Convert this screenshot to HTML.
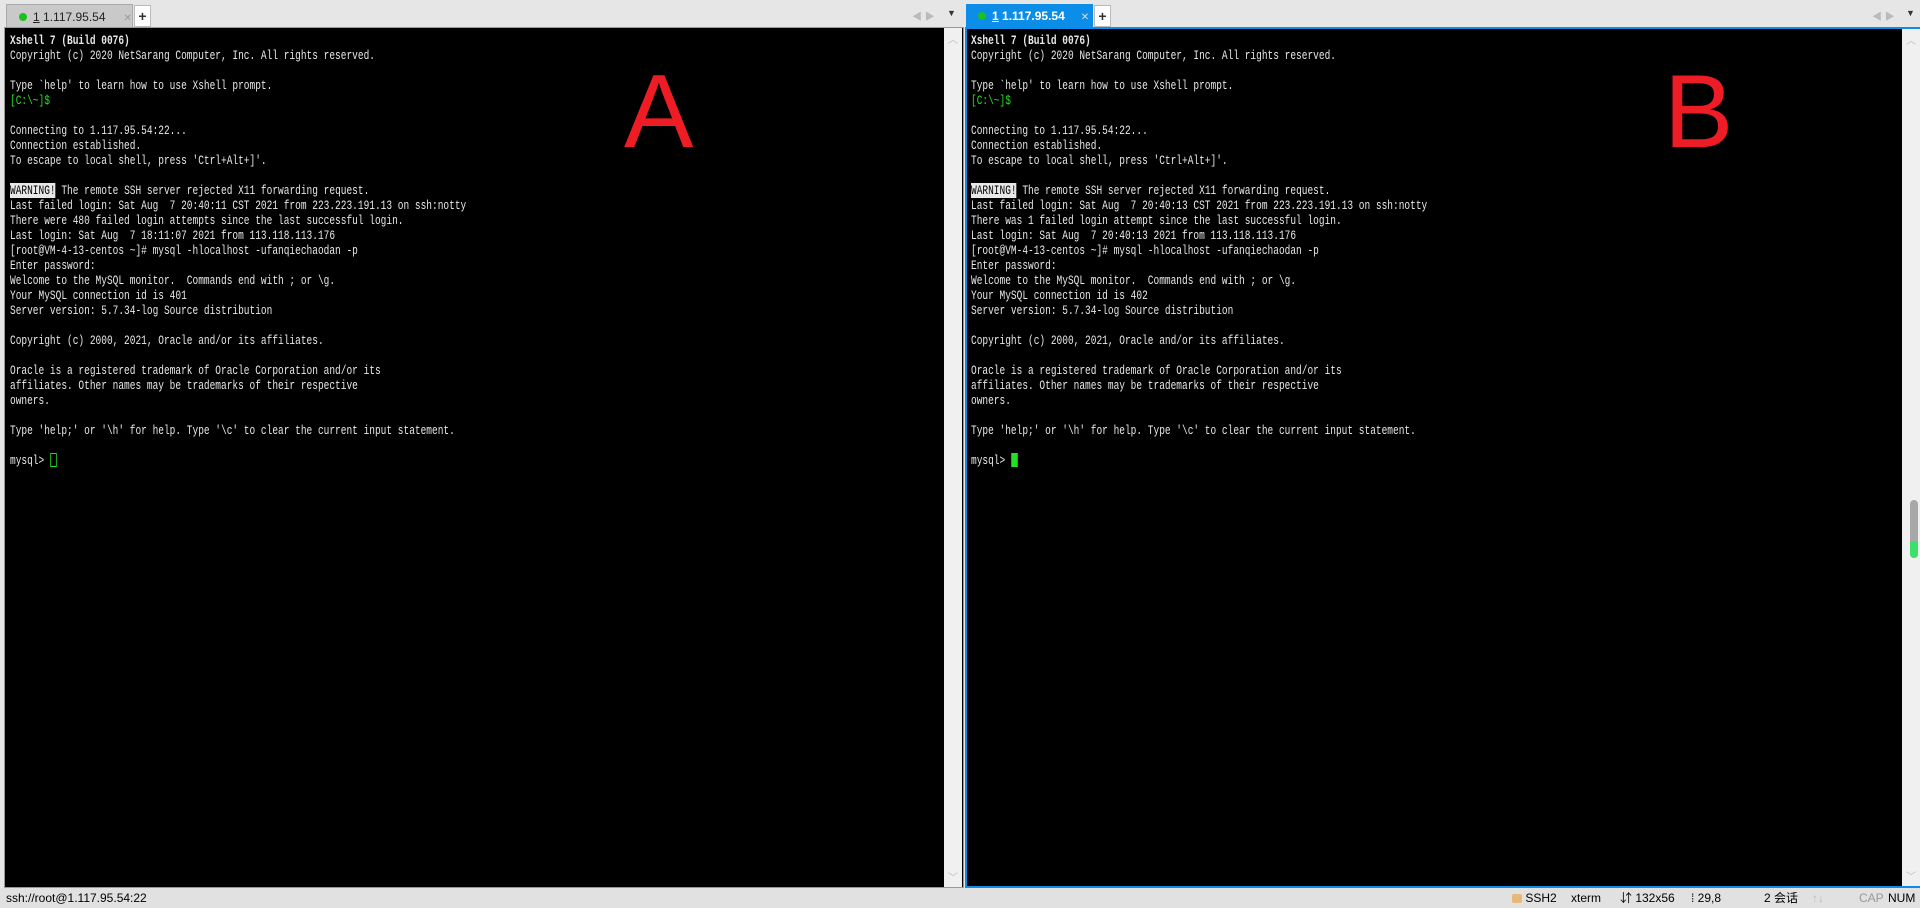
<!DOCTYPE html>
<html><head><meta charset="utf-8"><style>
*{margin:0;padding:0;box-sizing:border-box}
body{width:1920px;height:908px;background:#e6e6e6;position:relative;overflow:hidden;font-family:"Liberation Sans","Noto Sans CJK SC",sans-serif}
.abs{position:absolute}
.tabbar{top:0;height:28px;background:#e6e6e6}
.tab{top:4px;height:24px;font-size:12px;line-height:24px;padding-left:12px;white-space:nowrap}
.dot{display:inline-block;width:8px;height:8px;border-radius:50%;background:#1bc11b;margin-right:6px;vertical-align:0}
.plus{top:5px;width:17px;height:22px;background:#fff;border:1px solid #bbb;font-size:14px;font-weight:bold;text-align:center;line-height:20px;color:#333}
.txt{position:absolute;font-family:"Liberation Mono",monospace;font-size:13px;line-height:15px;color:#e8e8e8;white-space:pre;transform:scaleX(0.731);transform-origin:0 0}
.g{color:#22e022}
.w{background:#e8e8e8;color:#000}
.sb{background:#f0f0f0}
.big{color:#ee1c24;font-size:104px;line-height:1;font-family:"Liberation Sans",sans-serif}
.status{top:888px;height:20px;left:0;width:1920px;background:#e1e1e1;font-size:12px;line-height:20px;color:#000}
</style></head><body>
<div class="abs tabbar" style="left:0;width:1920px"></div>
<!-- left tab -->
<div class="abs tab" style="left:6px;width:127px;background:#c9c9c9;border:1px solid #aaa;border-bottom:none;color:#222"><span class="dot"></span><u>1</u> 1.117.95.54<span style="color:#999;margin-left:18px;font-size:10px">✕</span></div>
<div class="abs plus" style="left:134px">+</div>
<div class="abs" style="left:912px;top:8px;font-size:10px;color:#bbb">◀ ▶</div>
<div class="abs" style="left:947px;top:8px;font-size:9px;color:#333">▼</div>
<!-- right tab -->
<div class="abs tab" style="left:966px;width:127px;background:#0c8ee8;color:#fff;font-weight:bold;font-size:12px"><span class="dot"></span><u>1</u> 1.117.95.54<span style="font-weight:normal;margin-left:16px;font-size:10px;color:#dde">✕</span></div>
<div class="abs plus" style="left:1094px">+</div>
<div class="abs" style="left:1872px;top:8px;font-size:10px;color:#bbb">◀ ▶</div>
<div class="abs" style="left:1906px;top:8px;font-size:9px;color:#333">▼</div>

<!-- left pane -->
<div class="abs" style="left:4px;top:27px;width:960px;height:861px;border:1px solid #999;background:#000"></div>
<div class="abs sb" style="left:944px;top:28px;width:18px;height:859px"><div style="text-align:center;color:#bbb;font-size:10px;margin-top:3px">︿</div><div style="position:absolute;bottom:3px;width:100%;text-align:center;color:#bbb;font-size:10px">﹀</div></div>
<div class="txt" style="left:10px;top:33px"><b>Xshell 7 (Build 0076)</b>
Copyright (c) 2020 NetSarang Computer, Inc. All rights reserved.

Type `help' to learn how to use Xshell prompt.
<span class="g">[C:\~]$</span>

Connecting to 1.117.95.54:22...
Connection established.
To escape to local shell, press 'Ctrl+Alt+]'.

<span class="w">WARNING!</span> The remote SSH server rejected X11 forwarding request.
Last failed login: Sat Aug  7 20:40:11 CST 2021 from 223.223.191.13 on ssh:notty
There were 480 failed login attempts since the last successful login.
Last login: Sat Aug  7 18:11:07 2021 from 113.118.113.176
[root@VM-4-13-centos ~]# mysql -hlocalhost -ufanqiechaodan -p
Enter password:
Welcome to the MySQL monitor.  Commands end with ; or \g.
Your MySQL connection id is 401
Server version: 5.7.34-log Source distribution

Copyright (c) 2000, 2021, Oracle and/or its affiliates.

Oracle is a registered trademark of Oracle Corporation and/or its
affiliates. Other names may be trademarks of their respective
owners.

Type 'help;' or '\h' for help. Type '\c' to clear the current input statement.

mysql> <span style="display:inline-block;width:9px;height:14px;border:1px solid #22e022;vertical-align:-3px"></span></div>
<div class="abs big" style="left:624px;top:60px">A</div>

<!-- right pane -->
<div class="abs" style="left:965px;top:27px;width:955px;height:861px;border:2px solid #0c8ee8;border-right:none;background:#000"></div>
<div class="abs sb" style="left:1902px;top:29px;width:18px;height:857px"><div style="text-align:center;color:#bbb;font-size:10px;margin-top:3px">︿</div>
<div style="position:absolute;left:8px;top:471px;width:8px;height:58px;border-radius:4px;background:#a8a8a8"></div>
<div style="position:absolute;left:8px;top:512px;width:8px;height:17px;border-radius:0 0 4px 4px;background:#3de06a"></div>
<div style="position:absolute;bottom:3px;width:100%;text-align:center;color:#bbb;font-size:10px">﹀</div></div>
<div class="txt" style="left:971px;top:33px"><b>Xshell 7 (Build 0076)</b>
Copyright (c) 2020 NetSarang Computer, Inc. All rights reserved.

Type `help' to learn how to use Xshell prompt.
<span class="g">[C:\~]$</span>

Connecting to 1.117.95.54:22...
Connection established.
To escape to local shell, press 'Ctrl+Alt+]'.

<span class="w">WARNING!</span> The remote SSH server rejected X11 forwarding request.
Last failed login: Sat Aug  7 20:40:13 CST 2021 from 223.223.191.13 on ssh:notty
There was 1 failed login attempt since the last successful login.
Last login: Sat Aug  7 20:40:13 2021 from 113.118.113.176
[root@VM-4-13-centos ~]# mysql -hlocalhost -ufanqiechaodan -p
Enter password:
Welcome to the MySQL monitor.  Commands end with ; or \g.
Your MySQL connection id is 402
Server version: 5.7.34-log Source distribution

Copyright (c) 2000, 2021, Oracle and/or its affiliates.

Oracle is a registered trademark of Oracle Corporation and/or its
affiliates. Other names may be trademarks of their respective
owners.

Type 'help;' or '\h' for help. Type '\c' to clear the current input statement.

mysql> <span style="display:inline-block;width:9px;height:14px;background:#22e022;vertical-align:-3px"></span></div>
<div class="abs big" style="left:1664px;top:60px">B</div>

<!-- status -->
<div class="abs status">
<span class="abs" style="left:6px">ssh://root@1.117.95.54:22</span>
<span class="abs" style="left:1512px"><span style="display:inline-block;width:10px;height:9px;background:#e8b878;border-radius:2px;vertical-align:-1px"></span> SSH2</span>
<span class="abs" style="left:1571px">xterm</span>
<span class="abs" style="left:1620px">⇵ 132x56</span>
<span class="abs" style="left:1691px">⁞ 29,8</span>
<span class="abs" style="left:1764px">2 会话</span>
<span class="abs" style="left:1812px;color:#bbb">↑↓</span>
<span class="abs" style="left:1859px;color:#999">CAP</span>
<span class="abs" style="left:1888px">NUM</span>
</div>
</body></html>
